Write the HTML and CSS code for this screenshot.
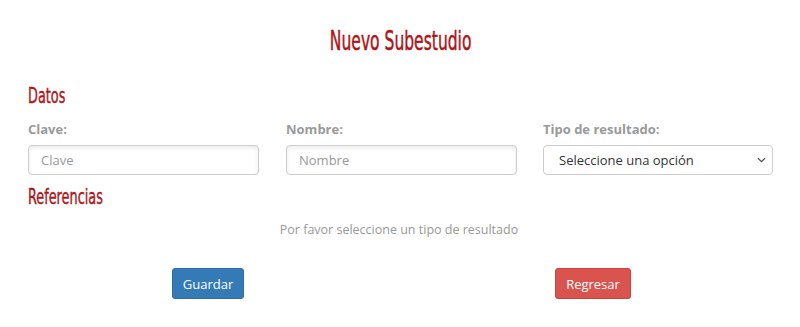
FILE: index.html
```html
<!DOCTYPE html>
<html lang="es">
<head>
<meta charset="utf-8">
<title>Nuevo Subestudio</title>
<link rel="stylesheet" href="styles.css">
</head>
<body>
<div class="container">
  <h1 class="title"><span class="cond-title">Nuevo Subestudio</span></h1>
  <h2 class="section"><span class="cond">Datos</span></h2>
  <div class="row">
    <div class="col">
      <label class="label">Clave:</label>
      <input class="field" type="text" placeholder="Clave">
    </div>
    <div class="col">
      <label class="label">Nombre:</label>
      <input class="field" type="text" placeholder="Nombre">
    </div>
    <div class="col">
      <label class="label">Tipo de resultado:</label>
      <div class="select">
        <span>Seleccione una opción</span>
        <svg class="chev" width="9" height="6" viewBox="0 0 9 6"><path d="M1 1.2l3.5 3.5 3.5-3.5" fill="none" stroke="#555" stroke-width="1.3"/></svg>
      </div>
    </div>
  </div>
  <h2 class="section refs"><span class="cond">Referencias</span></h2>
  <p class="msg">Por favor seleccione un tipo de resultado</p>
  <div class="actions">
    <div class="half"><button class="btn primary">Guardar</button></div>
    <div class="half"><button class="btn danger">Regresar</button></div>
  </div>
</div>
</body>
</html>
```
FILE: styles.css
```css
* { box-sizing: border-box; }
body {
  margin: 0;
  background: #fff;
  font-family: "Open Sans", "Liberation Sans", sans-serif;
  font-size: 13px;
  color: #333;
}
.container {
  padding: 0 15px 0 13px;
  width: 800px;
}
.title {
  margin: 0;
  height: 82px;
  line-height: 82px;
  text-align: center;
  font-family: "DejaVu Sans Condensed", sans-serif;
  font-weight: normal;
  font-size: 27px;
  color: #ad1518;
}
.cond-title {
  display: inline-block;
  transform: scaleX(0.64);
  -webkit-text-stroke: 0.5px #ad1518;
  margin-left: 3px;
}
.section {
  margin: 0;
  padding-left: 15px;
  font-family: "DejaVu Sans Condensed", sans-serif;
  font-weight: normal;
  font-size: 21px;
  line-height: 28px;
  height: 28px;
  color: #ad1518;
}
.cond {
  display: inline-block;
  transform-origin: left center;
  transform: scaleX(0.68);
  -webkit-text-stroke: 0.4px #ad1518;
}
.row {
  display: grid;
  grid-template-columns: 258px 257px 257px;
}
.col {
  padding: 0 15px;
}
.label {
  display: block;
  font-weight: bold;
  color: #9a9a9a;
  font-size: 13px;
  line-height: 18px;
  margin-top: 10px;
  margin-bottom: 7px;
}
.field, .select {
  display: block;
  width: 231px;
  height: 30px;
  border: 1px solid #ccc;
  border-radius: 4px;
  box-shadow: inset 0 2px 4px rgba(0,0,0,0.08);
  padding: 0 12px;
  font-family: "Open Sans", "Liberation Sans", sans-serif;
  font-size: 13px;
  color: #555;
  outline: none;
}
.field::placeholder { color: #999; }
.select {
  display: flex;
  align-items: center;
  justify-content: space-between;
  box-shadow: none;
  color: #333;
  padding: 0 6px 0 15px;
  width: 230px;
}
.refs {
  margin-top: 8px;
}
.msg {
  margin: 10px 0 0;
  text-align: center;
  color: #999;
  font-size: 12.5px;
  line-height: 18px;
}
.actions {
  display: grid;
  grid-template-columns: 385px 386px;
  margin-top: 29px;
}
.half {
  display: flex;
  justify-content: center;
}
.btn {
  height: 31px;
  border-radius: 3px;
  border: 1px solid;
  font-family: "Open Sans", "Liberation Sans", sans-serif;
  font-size: 13px;
  color: #fff;
  padding: 0 10px;
}
.primary { background: #337ab7; border-color: #2e6da4; margin-left: 5px; }
.danger { background: #d9534f; border-color: #d43f3a; margin-left: 4px; }
```
